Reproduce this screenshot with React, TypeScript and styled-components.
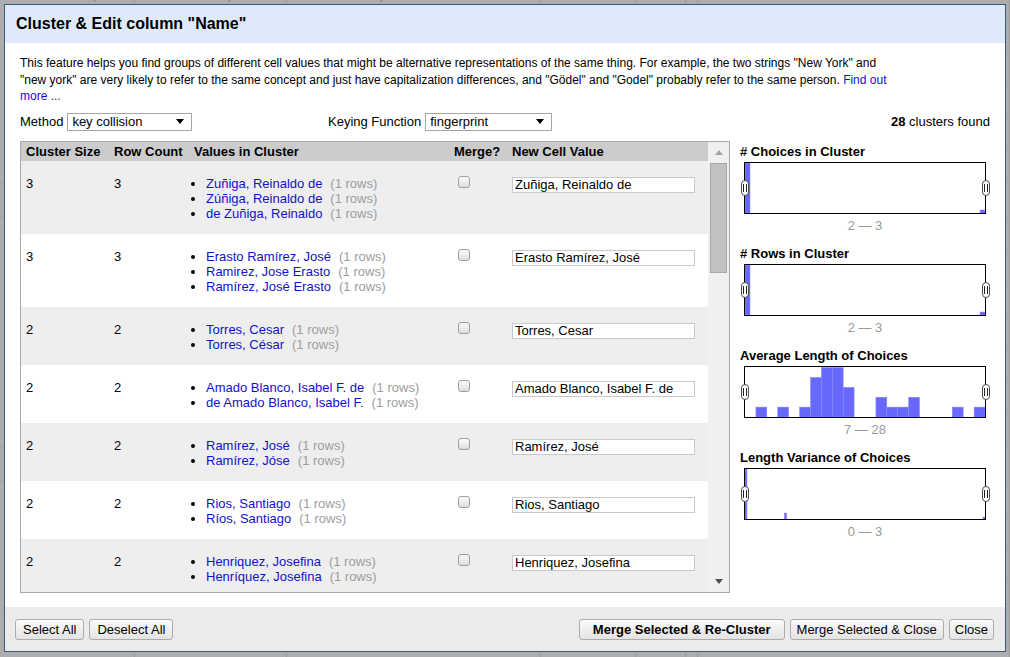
import React from 'react';
import styled, { createGlobalStyle } from 'styled-components';

const GlobalStyle = createGlobalStyle`
  html, body {
    margin: 0;
    padding: 0;
  }
  body {
    width: 1010px;
    height: 657px;
    overflow: hidden;
    background: #adadad;
    font-family: "Liberation Sans", Arial, sans-serif;
    font-size: 13px;
    color: #000;
  }
`;

const Screen = styled.div`
  position: relative;
  width: 1010px;
  height: 657px;
  overflow: hidden;
`;

/* the data grid behind the modal */
const BgGrid = styled.div`
  margin-top: -14px;
  display: grid;
  grid-template-columns: 135px 152px 254px 95px 50px 12px 1fr;
  grid-auto-rows: 33px;
  color: #5c5c5c;
`;

const BgCell = styled.div`
  border-right: 1px solid #9c9c9c;
  border-bottom: 1px solid #a3a3a3;
  padding: 2px 4px 0 3px;
  white-space: nowrap;
  overflow: hidden;
`;

const Dialog = styled.div`
  position: absolute;
  left: 4px;
  top: 4px;
  width: 1002px;
  height: 648px;
  box-sizing: border-box;
  border: 1px solid #375a80;
  background: #fff;
  display: flex;
  flex-direction: column;
`;

const Header = styled.div`
  flex: none;
  height: 38px;
  background: #deeafa;
  display: flex;
  align-items: center;
  padding: 0 11px;
`;

const Title = styled.h1`
  margin: 0;
  font-size: 16px;
  font-weight: bold;
`;

const Body = styled.div`
  flex: 1;
  padding: 12px 15px 0;
  display: flex;
  flex-direction: column;
`;

const Intro = styled.p`
  margin: 0;
  max-width: 876px;
  font-size: 12px;
  line-height: 16.5px;
`;

const Link = styled.a`
  color: #11c;
  text-decoration: none;
`;

const Controls = styled.div`
  display: grid;
  grid-template-columns: 308px 1fr auto;
  align-items: center;
  height: 18px;
  margin: 8px 0 10px;
`;

const Field = styled.div`
  display: flex;
  align-items: center;
  gap: 4px;
`;

const SelectBox = styled.div<{ $w: number }>`
  width: ${(p) => p.$w}px;
  height: 18px;
  box-sizing: border-box;
  border: 1px solid #a6a6a6;
  background: #fff;
  display: flex;
  align-items: center;
  justify-content: space-between;
  padding: 0 7px 0 4px;
`;

const Found = styled.div`
  text-align: right;
`;

const Main = styled.div`
  display: flex;
  gap: 10px;
  height: 452px;
`;

const Panel = styled.div`
  flex: none;
  width: 710px;
  box-sizing: border-box;
  border: 1px solid #a9a9a9;
  display: flex;
  overflow: hidden;
`;

const TableArea = styled.div`
  flex: 1;
  display: flex;
  flex-direction: column;
  overflow: hidden;
`;

const cols = '88px 80px 260px 58px 1fr';

const HeadRow = styled.div`
  flex: none;
  display: grid;
  grid-template-columns: ${cols};
  height: 19px;
  line-height: 19px;
  background: #cccccc;
  font-weight: bold;
`;

const HeadCell = styled.div`
  padding: 0 5px;
  white-space: nowrap;
`;

const Row = styled.div<{ $alt: boolean }>`
  flex: none;
  display: grid;
  grid-template-columns: ${cols};
  padding: 15px 0 13px;
  line-height: 15px;
  background: ${(p) => (p.$alt ? '#ffffff' : '#eeeeee')};
`;

const Cell = styled.div`
  padding: 0 5px;
  white-space: nowrap;
`;

const ValueList = styled.ul`
  margin: 0;
  padding-left: 12px;
  list-style: disc;
`;

const ValueLink = styled.a`
  color: #11c;
  text-decoration: none;
`;

const RowCount = styled.span`
  margin-left: 8px;
  color: #9d9d9d;
`;

const Check = styled.input.attrs({ type: 'checkbox' })`
  appearance: none;
  display: block;
  width: 12px;
  height: 12px;
  margin: 0 0 0 4px;
  box-sizing: border-box;
  border: 1px solid #a0a0a0;
  border-radius: 3px;
  background: linear-gradient(#fdfdfd, #dcdcdc);
`;

const ValueInput = styled.input`
  display: block;
  width: 183px;
  height: 16px;
  margin: 1px 0 0;
  box-sizing: border-box;
  border: 1px solid #c9c9c9;
  padding: 0 2px;
  font-family: inherit;
  font-size: 13px;
  line-height: 14px;
  color: #000;
`;

const Scrollbar = styled.div`
  flex: none;
  width: 21px;
  background: #f0f0f0;
  display: flex;
  flex-direction: column;
  align-items: center;
`;

const ScrollButton = styled.div`
  flex: none;
  height: 21px;
  width: 21px;
  display: flex;
  align-items: center;
  justify-content: center;
`;

const Thumb = styled.div`
  flex: none;
  width: 17px;
  height: 110px;
  box-sizing: border-box;
  background: #c1c1c1;
  border: 1px solid #a8a8a8;
`;

const Track = styled.div`
  flex: 1;
`;

const Facets = styled.div`
  flex: 1;
  padding-top: 3px;
`;

const Facet = styled.div`
  margin-bottom: 12px;
`;

const FacetTitle = styled.div`
  font-weight: bold;
  line-height: 16px;
`;

const Histo = styled.div`
  position: relative;
  margin: 2px 0 0 4px;
  width: 242px;
  height: 52px;
  box-sizing: border-box;
  border: 1px solid #000;
  background: #fff;
`;

const Handle = styled.span<{ $side: 'left' | 'right' }>`
  position: absolute;
  top: 50%;
  ${(p) => (p.$side === 'left' ? 'left: -4px;' : 'right: -5px;')}
  width: 8px;
  height: 16px;
  margin-top: -8px;
  box-sizing: border-box;
  border: 1px solid #4a4a4a;
  border-radius: 4px;
  background: #fff;

  &::before {
    content: '';
    position: absolute;
    left: 1px;
    top: 3px;
    width: 2px;
    height: 8px;
    border-left: 1px solid #222;
    border-right: 1px solid #222;
  }
`;

const RangeLabel = styled.div`
  margin-top: 4px;
  line-height: 16px;
  text-align: center;
  color: #9a9a9a;
`;

const Footer = styled.div`
  flex: none;
  height: 44px;
  background: #ebebeb;
  display: flex;
  align-items: center;
  justify-content: space-between;
  padding: 0 11px 0 10px;
`;

const ButtonGroup = styled.div`
  display: flex;
  gap: 5px;
`;

const Button = styled.button<{ $primary?: boolean; $pad?: number }>`
  height: 21px;
  padding: 0 ${(p) => p.$pad ?? 6}px;
  box-sizing: border-box;
  border: 1px solid #acacac;
  border-radius: 3px;
  background: linear-gradient(#fbfbfb, #e3e3e3);
  font-family: inherit;
  font-size: 13px;
  font-weight: ${(p) => (p.$primary ? 'bold' : 'normal')};
  color: #000;
`;

type Bar = { x: number; w: number; h: number };

const Histogram = ({ bars }: { bars: Bar[] }) => (
  <Histo>
    <svg width="240" height="50" style={{ display: 'block' }}>
      {bars.map((b, i) => (
        <rect
          key={i}
          x={b.x}
          y={50 - b.h}
          width={b.w}
          height={b.h}
          fill="#6868ff"
          stroke="#8c8cff"
          strokeWidth="0.5"
        />
      ))}
    </svg>
    <Handle $side="left" />
    <Handle $side="right" />
  </Histo>
);

const binW = 240 / 22;
const avgBins: [number, number][] = [
  [1, 1], [3, 1], [5, 1], [6, 4], [7, 5], [8, 5], [9, 3],
  [12, 2], [13, 1], [14, 1], [15, 2], [19, 1], [21, 1],
];

const facets: { title: string; range: string; bars: Bar[] }[] = [
  { title: '# Choices in Cluster', range: '2 — 3', bars: [{ x: 0, w: 5, h: 50 }, { x: 235, w: 5, h: 3 }] },
  { title: '# Rows in Cluster', range: '2 — 3', bars: [{ x: 0, w: 5, h: 50 }, { x: 235, w: 5, h: 3 }] },
  {
    title: 'Average Length of Choices',
    range: '7 — 28',
    bars: avgBins.map(([i, n]) => ({ x: i * binW, w: binW, h: n * 9.9 })),
  },
  {
    title: 'Length Variance of Choices',
    range: '0 — 3',
    bars: [{ x: 0, w: 2, h: 50 }, { x: 39.3, w: 2.4, h: 6 }, { x: 238, w: 2, h: 2 }],
  },
];

const clusters = [
  { size: 3, rows: 3, values: ['Zuñiga, Reinaldo de', 'Zúñiga, Reinaldo de', 'de Zuñiga, Reinaldo'], value: 'Zuñiga, Reinaldo de' },
  { size: 3, rows: 3, values: ['Erasto Ramírez, José', 'Ramirez, Jose Erasto', 'Ramírez, José Erasto'], value: 'Erasto Ramírez, José' },
  { size: 2, rows: 2, values: ['Torres, Cesar', 'Torres, César'], value: 'Torres, Cesar' },
  { size: 2, rows: 2, values: ['Amado Blanco, Isabel F. de', 'de Amado Blanco, Isabel F.'], value: 'Amado Blanco, Isabel F. de' },
  { size: 2, rows: 2, values: ['Ramírez, José', 'Ramírez, Jóse'], value: 'Ramírez, José' },
  { size: 2, rows: 2, values: ['Rios, Santiago', 'Ríos, Santiago'], value: 'Rios, Santiago' },
  { size: 2, rows: 2, values: ['Henriquez, Josefina', 'Henríquez, Josefina'], value: 'Henriquez, Josefina' },
];

// only the top row of the page behind peeks out above the dialog
const bgTop = ['Alvarez Cuadra, Elvira', 'Alvarez Cuadra, Elvira', 'Alvarez Cuadra, Elvira', 'extract.txt', '', '', ''];

const DownArrow = ({ color = '#000' }: { color?: string }) => (
  <svg width="8" height="5" viewBox="0 0 8 5">
    <path d="M0 0h8L4 5z" fill={color} />
  </svg>
);

export default function App() {
  return (
    <>
      <GlobalStyle />
      <Screen>
        <BgGrid>
          {Array.from({ length: 21 }).flatMap((_, r) =>
            bgTop.map((t, c) => <BgCell key={`${r}-${c}`}>{r === 0 ? t : ''}</BgCell>)
          )}
        </BgGrid>

        <Dialog>
          <Header>
            <Title>Cluster &amp; Edit column "Name"</Title>
          </Header>

          <Body>
            <Intro>
              This feature helps you find groups of different cell values that might be alternative
              representations of the same thing. For example, the two strings "New York" and "new
              york" are very likely to refer to the same concept and just have capitalization
              differences, and "Gödel" and "Godel" probably refer to the same person.{' '}
              <Link href="#">Find out more ...</Link>
            </Intro>

            <Controls>
              <Field>
                Method
                <SelectBox $w={125}>
                  key collision
                  <DownArrow />
                </SelectBox>
              </Field>
              <Field>
                Keying Function
                <SelectBox $w={127}>
                  fingerprint
                  <DownArrow />
                </SelectBox>
              </Field>
              <Found>
                <b>28</b> clusters found
              </Found>
            </Controls>

            <Main>
              <Panel>
                <TableArea>
                  <HeadRow>
                    <HeadCell>Cluster Size</HeadCell>
                    <HeadCell>Row Count</HeadCell>
                    <HeadCell>Values in Cluster</HeadCell>
                    <HeadCell>Merge?</HeadCell>
                    <HeadCell>New Cell Value</HeadCell>
                  </HeadRow>
                  {clusters.map((c, i) => (
                    <Row key={i} $alt={i % 2 === 1}>
                      <Cell>{c.size}</Cell>
                      <Cell>{c.rows}</Cell>
                      <Cell>
                        <ValueList>
                          {c.values.map((v) => (
                            <li key={v}>
                              <ValueLink href="#">{v}</ValueLink>
                              <RowCount>(1 rows)</RowCount>
                            </li>
                          ))}
                        </ValueList>
                      </Cell>
                      <Cell>
                        <Check />
                      </Cell>
                      <Cell>
                        <ValueInput defaultValue={c.value} />
                      </Cell>
                    </Row>
                  ))}
                </TableArea>
                <Scrollbar>
                  <ScrollButton>
                    <svg width="8" height="5" viewBox="0 0 8 5">
                      <path d="M0 5h8L4 0z" fill="#a3a3a3" />
                    </svg>
                  </ScrollButton>
                  <Thumb />
                  <Track />
                  <ScrollButton>
                    <DownArrow color="#505050" />
                  </ScrollButton>
                </Scrollbar>
              </Panel>

              <Facets>
                {facets.map((f) => (
                  <Facet key={f.title}>
                    <FacetTitle>{f.title}</FacetTitle>
                    <Histogram bars={f.bars} />
                    <RangeLabel>{f.range}</RangeLabel>
                  </Facet>
                ))}
              </Facets>
            </Main>
          </Body>

          <Footer>
            <ButtonGroup>
              <Button $pad={7}>Select All</Button>
              <Button $pad={7}>Deselect All</Button>
            </ButtonGroup>
            <ButtonGroup>
              <Button $primary $pad={13}>Merge Selected &amp; Re-Cluster</Button>
              <Button>Merge Selected &amp; Close</Button>
              <Button $pad={5}>Close</Button>
            </ButtonGroup>
          </Footer>
        </Dialog>
      </Screen>
    </>
  );
}
